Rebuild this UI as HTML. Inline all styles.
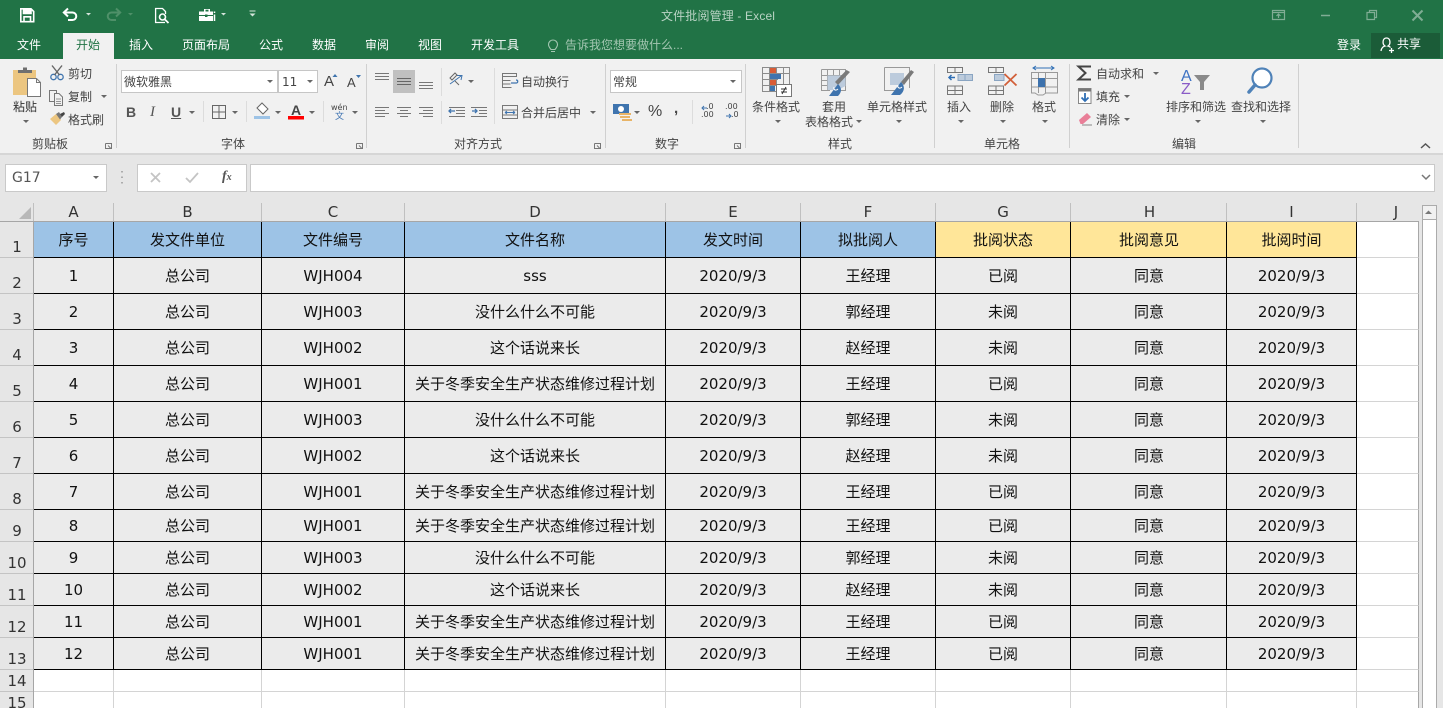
<!DOCTYPE html>
<html lang="zh-CN"><head><meta charset="utf-8"><title>文件批阅管理 - Excel</title>
<style>
html,body{margin:0;padding:0;width:1443px;height:708px;overflow:hidden;background:#e6e6e6}
body{position:relative;font-family:"Liberation Sans","Noto Sans CJK SC",sans-serif}
.b{position:absolute}
.t{position:absolute;white-space:nowrap;line-height:16px;font-size:12px;color:#444;margin-top:1px}
.g{color:#fff}
.a{position:absolute;width:0;height:0;border-top:3px solid #666;border-left:3px solid transparent;border-right:3px solid transparent}
.d{font-family:"DejaVu Sans","Noto Sans CJK SC",sans-serif}
table{position:absolute;left:34px;top:222px;border-collapse:separate;border-spacing:0;table-layout:fixed;width:1385px;font:15px/18px "DejaVu Sans","Noto Sans CJK SC",sans-serif;color:#111}
td{box-sizing:border-box;padding:0;text-align:center;vertical-align:middle;border-right:1px solid #000;border-bottom:1px solid #000;background:#ebebeb;white-space:nowrap;overflow:hidden}
td:nth-child(8){padding-left:1px}
td.h{background:#9dc3e6}td.y{background:#ffe699}
td.j{background:#fff;border-right:1px solid #a8a8a8;border-bottom:1px solid #d4d4d4}
td.e{background:#fff;border-right:1px solid #d4d4d4;border-bottom:1px solid #d4d4d4}
.c{position:absolute;top:204px;height:17px;line-height:17px;font:15px/17px "DejaVu Sans",sans-serif;color:#333;text-align:center}
.r{position:absolute;left:0;width:34px;text-align:center;font:15px/18px "DejaVu Sans",sans-serif;color:#333;margin-top:1px}
svg{position:absolute;left:0;top:0}
</style></head><body>
<div class="b" style="left:0;top:0;width:1443px;height:59px;background:#217346"></div>
<div class="b" style="left:63px;top:33px;width:51px;height:26px;background:#f1f1f1"></div>
<div class="b" style="left:1371px;top:33px;width:69px;height:25px;background:#1b5c38"></div>
<div class="b" style="left:0;top:59px;width:1443px;height:94px;background:#f1f1f1"></div>
<div class="b" style="left:0;top:153px;width:1443px;height:2px;background:#d6d6d6"></div>

<!-- boxes -->
<div class="b" style="left:121px;top:70px;width:155px;height:21px;background:#fff;border:1px solid #c6c6c6"></div>
<div class="b" style="left:278px;top:70px;width:38px;height:21px;background:#fff;border:1px solid #c6c6c6"></div>
<div class="b" style="left:610px;top:70px;width:130px;height:21px;background:#fff;border:1px solid #c6c6c6"></div>
<div class="b" style="left:393px;top:70px;width:22px;height:23px;background:#c0c0c0"></div>
<div class="b" style="left:5px;top:164px;width:100px;height:26px;background:#fff;border:1px solid #c9c9c9"></div>
<div class="b" style="left:137px;top:164px;width:108px;height:26px;background:#fff;border:1px solid #c9c9c9"></div>
<div class="b" style="left:250px;top:164px;width:1183px;height:26px;background:#fff;border:1px solid #c9c9c9"></div>

<!-- title / tabs -->
<span class="t" style="left:661px;top:7px;color:#b9d3c4;letter-spacing:.15px">文件批阅管理 - Excel</span>
<span class="t g" style="left:17px;top:36px">文件</span>
<span class="t" style="left:76px;top:36px;color:#217346">开始</span>
<span class="t g" style="left:129px;top:36px">插入</span>
<span class="t g" style="left:182px;top:36px">页面布局</span>
<span class="t g" style="left:259px;top:36px">公式</span>
<span class="t g" style="left:312px;top:36px">数据</span>
<span class="t g" style="left:365px;top:36px">审阅</span>
<span class="t g" style="left:418px;top:36px">视图</span>
<span class="t g" style="left:471px;top:36px">开发工具</span>
<span class="t" style="left:565px;top:36px;color:#a3c6b1">告诉我您想要做什么...</span>
<span class="t g" style="left:1337px;top:36px">登录</span>
<span class="t g" style="left:1397px;top:35px">共享</span>

<!-- clipboard -->
<span class="t" style="left:13px;top:98px;color:#333">粘贴</span><span class="a" style="left:23px;top:120px"></span>
<span class="t" style="left:68px;top:65px">剪切</span>
<span class="t" style="left:68px;top:88px">复制</span><span class="a" style="left:101px;top:95px"></span>
<span class="t" style="left:68px;top:111px">格式刷</span>
<span class="t" style="left:32px;top:135px">剪贴板</span>
<!-- font -->
<span class="t" style="left:124px;top:73px">微软雅黑</span><span class="a" style="left:267px;top:80px"></span>
<span class="t d" style="left:282px;top:73px">11</span><span class="a" style="left:307px;top:80px"></span>
<span class="t" style="left:324px;top:72px;font-size:15px;line-height:18px">A</span>
<span class="t" style="left:347px;top:74px;font-size:13px;line-height:16px">A</span>
<span class="t" style="left:126px;top:103px;font:bold 14px/16px 'Liberation Sans';color:#555">B</span>
<span class="t" style="left:150px;top:103px;font:italic 15px/16px 'Liberation Serif';color:#555">I</span>
<span class="t" style="left:171px;top:103px;font:bold 14px/16px 'Liberation Sans';text-decoration:underline;color:#555">U</span>
<span class="a" style="left:189px;top:111px"></span><span class="a" style="left:232px;top:111px"></span>
<span class="a" style="left:275px;top:111px"></span><span class="a" style="left:309px;top:111px"></span>
<span class="t" style="left:288px;top:102px;font-size:14px;font-weight:bold;line-height:14px;width:16px;text-align:center">A</span>
<span class="t d" style="left:331px;top:102px;font-size:8px;line-height:10px">wén</span>
<span class="t" style="left:335px;top:110px;font-size:9px;line-height:11px;color:#3a70b0">文</span>
<span class="a" style="left:352px;top:111px"></span>
<span class="t" style="left:221px;top:135px">字体</span>
<!-- alignment -->
<span class="a" style="left:468px;top:80px"></span>
<span class="t" style="left:521px;top:73px">自动换行</span>
<span class="t" style="left:521px;top:104px">合并后居中</span><span class="a" style="left:590px;top:111px"></span>
<span class="t" style="left:454px;top:135px">对齐方式</span>
<!-- number -->
<span class="t" style="left:613px;top:73px">常规</span><span class="a" style="left:730px;top:80px"></span>
<span class="a" style="left:634px;top:111px"></span>
<span class="t" style="left:648px;top:103px;font-size:16px">%</span>
<span class="t" style="left:674px;top:100px;font-size:15px;font-weight:bold">,</span>
<span class="t d" style="left:706px;top:101px;font-size:8px;line-height:10px">.0</span>
<span class="t d" style="left:701px;top:109px;font-size:8px;line-height:10px">.00</span>
<span class="t d" style="left:725px;top:101px;font-size:8px;line-height:10px">.00</span>
<span class="t d" style="left:731px;top:109px;font-size:8px;line-height:10px">.0</span>
<span class="t" style="left:655px;top:135px">数字</span>
<!-- styles -->
<span class="t" style="left:752px;top:98px">条件格式</span><span class="a" style="left:775px;top:120px"></span>
<span class="t" style="left:822px;top:98px">套用</span>
<span class="t" style="left:805px;top:113px">表格格式</span><span class="a" style="left:856px;top:120px"></span>
<span class="t" style="left:867px;top:98px">单元格样式</span><span class="a" style="left:896px;top:120px"></span>
<span class="t" style="left:828px;top:135px">样式</span>
<!-- cells -->
<span class="t" style="left:947px;top:98px">插入</span><span class="a" style="left:958px;top:120px"></span>
<span class="t" style="left:990px;top:98px">删除</span><span class="a" style="left:1000px;top:120px"></span>
<span class="t" style="left:1032px;top:98px">格式</span><span class="a" style="left:1042px;top:120px"></span>
<span class="t" style="left:984px;top:135px">单元格</span>
<!-- editing -->
<span class="t" style="left:1096px;top:65px">自动求和</span><span class="a" style="left:1153px;top:72px"></span>
<span class="t" style="left:1096px;top:88px">填充</span><span class="a" style="left:1124px;top:95px"></span>
<span class="t" style="left:1096px;top:111px">清除</span><span class="a" style="left:1124px;top:118px"></span>
<span class="t" style="left:1166px;top:98px">排序和筛选</span><span class="a" style="left:1195px;top:120px"></span>
<span class="t" style="left:1231px;top:98px">查找和选择</span><span class="a" style="left:1260px;top:120px"></span>
<span class="t" style="left:1172px;top:135px">编辑</span>

<!-- formula -->
<span class="t d" style="left:12px;top:168px;font-size:14px;line-height:18px;color:#555">G17</span><span class="a" style="left:93px;top:176px"></span>
<span class="t" style="left:222px;top:168px;font:italic bold 14px/16px 'Liberation Serif';color:#555">f<span style="font-size:10px">x</span></span>

<!-- sheet -->
<div class="b" style="left:0;top:221px;width:1419px;height:1px;background:#a6a6a6"></div>
<div class="b" style="left:33px;top:222px;width:1px;height:486px;background:#a6a6a6"></div>
<span class="c" style="left:34px;width:79px">A</span><span class="c" style="left:114px;width:147px">B</span><span class="c" style="left:262px;width:142px">C</span><span class="c" style="left:405px;width:260px">D</span><span class="c" style="left:666px;width:134px">E</span><span class="c" style="left:801px;width:134px">F</span><span class="c" style="left:936px;width:134px">G</span><span class="c" style="left:1072px;width:155px">H</span><span class="c" style="left:1227px;width:129px">I</span><span class="c" style="left:1357px;width:78px">J</span>
<span class="r" style="top:237px">1</span><span class="r" style="top:273px">2</span><span class="r" style="top:309px">3</span><span class="r" style="top:345px">4</span><span class="r" style="top:381px">5</span><span class="r" style="top:417px">6</span><span class="r" style="top:453px">7</span><span class="r" style="top:489px">8</span><span class="r" style="top:521px">9</span><span class="r" style="top:553px">10</span><span class="r" style="top:585px">11</span><span class="r" style="top:617px">12</span><span class="r" style="top:649px">13</span><span class="r" style="top:671px">14</span><span class="r" style="top:693px">15</span>

<table>
<colgroup><col style="width:80px"><col style="width:148px"><col style="width:143px"><col style="width:261px"><col style="width:135px"><col style="width:135px"><col style="width:135px"><col style="width:156px"><col style="width:130px"><col style="width:62px"></colgroup>
<tr style="height:36px"><td class="h">序号</td><td class="h">发文件单位</td><td class="h">文件编号</td><td class="h">文件名称</td><td class="h">发文时间</td><td class="h">拟批阅人</td><td class="y">批阅状态</td><td class="y">批阅意见</td><td class="y">批阅时间</td><td class="j"></td></tr>
<tr style="height:36px"><td>1</td><td>总公司</td><td>WJH004</td><td>sss</td><td>2020/9/3</td><td>王经理</td><td>已阅</td><td>同意</td><td>2020/9/3</td><td class="j"></td></tr>
<tr style="height:36px"><td>2</td><td>总公司</td><td>WJH003</td><td>没什么什么不可能</td><td>2020/9/3</td><td>郭经理</td><td>未阅</td><td>同意</td><td>2020/9/3</td><td class="j"></td></tr>
<tr style="height:36px"><td>3</td><td>总公司</td><td>WJH002</td><td>这个话说来长</td><td>2020/9/3</td><td>赵经理</td><td>未阅</td><td>同意</td><td>2020/9/3</td><td class="j"></td></tr>
<tr style="height:36px"><td>4</td><td>总公司</td><td>WJH001</td><td>关于冬季安全生产状态维修过程计划</td><td>2020/9/3</td><td>王经理</td><td>已阅</td><td>同意</td><td>2020/9/3</td><td class="j"></td></tr>
<tr style="height:36px"><td>5</td><td>总公司</td><td>WJH003</td><td>没什么什么不可能</td><td>2020/9/3</td><td>郭经理</td><td>未阅</td><td>同意</td><td>2020/9/3</td><td class="j"></td></tr>
<tr style="height:36px"><td>6</td><td>总公司</td><td>WJH002</td><td>这个话说来长</td><td>2020/9/3</td><td>赵经理</td><td>未阅</td><td>同意</td><td>2020/9/3</td><td class="j"></td></tr>
<tr style="height:36px"><td>7</td><td>总公司</td><td>WJH001</td><td>关于冬季安全生产状态维修过程计划</td><td>2020/9/3</td><td>王经理</td><td>已阅</td><td>同意</td><td>2020/9/3</td><td class="j"></td></tr>
<tr style="height:32px"><td>8</td><td>总公司</td><td>WJH001</td><td>关于冬季安全生产状态维修过程计划</td><td>2020/9/3</td><td>王经理</td><td>已阅</td><td>同意</td><td>2020/9/3</td><td class="j"></td></tr>
<tr style="height:32px"><td>9</td><td>总公司</td><td>WJH003</td><td>没什么什么不可能</td><td>2020/9/3</td><td>郭经理</td><td>未阅</td><td>同意</td><td>2020/9/3</td><td class="j"></td></tr>
<tr style="height:32px"><td>10</td><td>总公司</td><td>WJH002</td><td>这个话说来长</td><td>2020/9/3</td><td>赵经理</td><td>未阅</td><td>同意</td><td>2020/9/3</td><td class="j"></td></tr>
<tr style="height:32px"><td>11</td><td>总公司</td><td>WJH001</td><td>关于冬季安全生产状态维修过程计划</td><td>2020/9/3</td><td>王经理</td><td>已阅</td><td>同意</td><td>2020/9/3</td><td class="j"></td></tr>
<tr style="height:32px"><td>12</td><td>总公司</td><td>WJH001</td><td>关于冬季安全生产状态维修过程计划</td><td>2020/9/3</td><td>王经理</td><td>已阅</td><td>同意</td><td>2020/9/3</td><td class="j"></td></tr>
<tr style="height:22px"><td class="e"></td><td class="e"></td><td class="e"></td><td class="e"></td><td class="e"></td><td class="e"></td><td class="e"></td><td class="e"></td><td class="e"></td><td class="j"></td></tr>
<tr style="height:22px"><td class="e"></td><td class="e"></td><td class="e"></td><td class="e"></td><td class="e"></td><td class="e"></td><td class="e"></td><td class="e"></td><td class="e"></td><td class="j"></td></tr>
</table>

<div class="b" style="left:1422px;top:205px;width:13px;height:503px;background:#fff;border-left:1px solid #ababab;border-right:1px solid #ababab"></div>
<div class="b" style="left:1422px;top:205px;width:13px;height:13px;background:#f1f1f1;border:1px solid #ababab"></div>

<svg width="1443" height="708" viewBox="0 0 1443 708" fill="none">
<!-- QAT -->
<g stroke="#fff" stroke-width="1.6">
<path d="M20.8 8.8H31L33.7 11.5V21.7H20.8Z"/><path d="M23.5 9V13.5H31V9" fill="#fff"/><path d="M24 21.5V16.8H30.5V21.5"/>
<path d="M68 8.5L63.8 12.5L68 16.5M64 12.5H72.5A3.7 3.7 0 0 1 72.5 20H68" stroke-width="2"/>
<path d="M116 8.5L120.2 12.5L116 16.5M120 12.5H111.5A3.7 3.7 0 0 0 111.5 20H116" stroke="#4f9069" stroke-width="2"/>
<path d="M165 22.5H155.6V8.5H162.5L165.5 11.5V14" stroke-width="1.3"/><circle cx="162.5" cy="17" r="3"/><path d="M164.8 19.4L168.5 23" stroke-width="1.8"/>
</g>
<path d="M199 11.5H204V9H210V11.5H213V21H199Z" fill="#fff"/><path d="M205.500 9.700H208.500V11.500H205.500Z" fill="#217346"/><path d="M199 15.500H213" stroke="#217346"/><path d="M205 14.500H207.500V17H205Z" fill="#217346"/><path d="M214.500 11.500V13M214.500 14.500V21" stroke="#fff" stroke-width="1.500"/>
<g fill="#d5e4db"><path d="M86 13H91L88.500 15.500Z"/><path d="M221 13H226L223.500 15.500Z"/><path d="M249.500 13.500H255.500L252.500 16.500Z"/><path d="M249.500 10.500H255.500V11.500H249.500Z"/></g>
<path d="M128 13H133L130.500 15.500Z" fill="#4f9069"/>
<!-- window controls -->
<g stroke="#80ad94" stroke-width="1.200">
<path d="M1272.500 10.500H1284.500V19.500H1272.500Z"/><path d="M1272.500 12.500H1284.500"/><path d="M1278.500 18V14.500M1276.500 16L1278.500 14L1280.500 16"/>
<path d="M1321 15.500H1330" stroke-width="1.500"/>
<path d="M1367 12.500H1374.500V19.500H1367ZM1369.500 12.500V10.500H1376.500V17.500H1374.500"/>
<path d="M1412.500 10.500L1422.500 20.500M1422.500 10.500L1412.500 20.500" stroke-width="2"/>
</g>
<!-- bulb -->
<path d="M551 50.500C549.500 48.500 548.500 47.500 548.500 45.500A4.500 4.500 0 0 1 557.500 45.500C557.500 47.500 556.500 48.500 555 50.500ZM551 52.500H555" stroke="#a3c6b1" stroke-width="1.100" transform="translate(0 -1)"/>
<!-- person -->
<path d="M1381 51C1381.500 47.500 1383 46.500 1385 46C1382 44 1382.500 38 1386.500 38C1390.500 38 1391 44 1388 46C1389 46.300 1390 46.800 1390.500 47.500M1389 50.500H1394M1391.500 48V53" stroke="#fff" stroke-width="1.300"/>
<!-- ribbon separators -->
<path d="M116.500 64V148M366.500 64V148M605.500 64V148M745.500 64V148M934.500 64V148M1069.500 64V148M1298.500 64V148" stroke="#d0d0d0"/>
<path d="M203.500 101V122M246.500 101V122M323.500 101V122M441.500 68V96M441.500 101V124M494.500 68V124M692.500 100V124" stroke="#dcdcdc"/>
<!-- launchers -->
<g stroke="#777"><path d="M105.500 143.500V148.500H111.500V143.500H105.500M108 145.500L110.500 148"/><path d="M356.500 143.500V148.500H362.500V143.500H356.500M359 145.500L361.500 148"/><path d="M594.500 143.500V148.500H600.500V143.500H594.500M597 145.500L599.500 148"/><path d="M734.500 143.500V148.500H740.500V143.500H734.500M737 145.500L739.500 148"/></g>
<!-- collapse -->
<path d="M1421 148L1425.500 144L1430 148" stroke="#555" stroke-width="1.500"/>
<!-- paste -->
<path d="M13 70H36V95H13Z" fill="#ecc681"/>
<path d="M18 73V70H23V67.500H27V70H32V73Z" fill="#6f6f6f"/>
<path d="M27.500 78.500H36.500L40.500 82.500V96.500H27.500Z" fill="#fff" stroke="#777"/>
<path d="M36.500 78.500V82.500H40.500" stroke="#777"/>
<!-- cut -->
<g stroke="#3f74ae" stroke-width="1.300"><circle cx="53.500" cy="77" r="2.700"/><circle cx="60.500" cy="77" r="2.700"/></g>
<path d="M52 65.500L59.500 75M62 65.500L54.500 75" stroke="#666" stroke-width="1.400"/>
<!-- copy -->
<g stroke="#777"><path d="M49.500 90.500H56.500V101.500H49.500Z"/><path d="M54.500 93.500H59L62.500 97V105.500H54.500Z" fill="#f1f1f1"/><path d="M56 99H61M56 101.500H61M56 103.500H61" stroke-width=".8"/></g>
<!-- brush -->
<path d="M50 119L56 114L61 120L56 125C54 123 52 121 50 119Z" fill="#ecc681"/>
<path d="M56 114L59 112L62 117L60 119.500Z" fill="#777"/><path d="M60 114L64 112L65 114L62 117Z" fill="#444"/>
<!-- grow shrink -->
<path d="M335 77L337.500 74H332.500Z" fill="#3f74ae" transform="rotate(180 335 75.500)"/><path d="M356 75H361L358.500 78Z" fill="#3f74ae"/>
<!-- border -->
<path d="M212.500 105.500H225.500V118.500H212.500ZM219 105.500V118.500M212.500 112H225.500" stroke="#666"/>
<!-- fill -->
<path d="M257 108L262 103L268 109L263 114Z" fill="#fff" stroke="#666"/><path d="M254 116H270V119H254Z" fill="#9dc3e6"/>
<path d="M288 116H304V119.500H288Z" fill="#f00"/>
<!-- align lines -->
<g stroke="#777"><path d="M375 73.500H389M375 76.500H389M375 79.500H389"/><path d="M397 78.500H411M397 81.500H411M397 84.500H411" stroke="#666"/><path d="M419 82.500H433M419 85.500H433M419 88.500H433"/>
<path d="M375 107.500H389M375 110.500H385M375 113.500H389M375 116.500H385"/><path d="M397 107.500H411M400 110.500H408M397 113.500H411M400 116.500H408"/><path d="M419 107.500H433M423 110.500H433M419 113.500H433M423 116.500H433"/>
<path d="M456 107.500H465M456 110.500H465M456 113.500H465M449 116.500H465M449 107.500H465" />
<path d="M479 107.500H487M479 110.500H487M479 113.500H487M471 116.500H487M471 107.500H487"/></g>
<path d="M455 111H449M451 109L449 111L451 113" stroke="#3f74ae" stroke-width="1.300"/>
<path d="M472 111H477M475 109L477 111L475 113" stroke="#3f74ae" stroke-width="1.300"/>
<!-- orientation -->
<path d="M450 84L461 76M457 75.500L462 75.500L461 80" stroke="#3f74ae"/><path d="M450 78L455 73L457 75L452 80ZM455 81L459 85" stroke="#666"/>
<!-- wrap -->
<path d="M502.500 73.500H516.500V76.500H502.500ZM502.500 76.500V87.500H511.500M502.500 80.500H510.500M502.500 84H510.500" stroke="#777"/>
<path d="M511 83H516.500C518 83 518.500 80 516 80" stroke="#3f74ae" stroke-width="1.200"/>
<!-- merge -->
<path d="M502.500 105.500H517.500V118.500H502.500ZM502.500 110H517.500M502.500 115H517.500" stroke="#777"/><path d="M505 112.500H515M505 112.500L507 111M505 112.500L507 114M515 112.500L513 111M515 112.500L513 114" stroke="#3f74ae"/>
<!-- currency -->
<path d="M613 104H629V114H613Z" fill="#3f74ae"/><circle cx="621" cy="109" r="3" fill="#fff"/><path d="M619 113H631V115H619ZM620 116H630V118H620ZM622 119H632V121H622Z" fill="#e8b467"/>
<!-- decimal arrows -->
<path d="M707 108H702M704 106L702 108L704 110" stroke="#3f74ae"/><path d="M726 116H731M729 114L731 116L729 118" stroke="#3f74ae"/>
<!-- cond format -->
<path d="M762.500 67.500H789.500V91.500H762.500ZM769.500 67.500V91.500M776.500 67.500V85M783.500 67.500V84M762.500 73.500H789.500M762.500 79.500H778M762.500 85.500H776" stroke="#8c8c8c"/>
<path d="M770 68H776V73H770Z" fill="#d85c36"/><path d="M770 74H781V79H770Z" fill="#3f74ae"/><path d="M770 80H776V85H770Z" fill="#d85c36"/><path d="M770 86H775V91H770Z" fill="#3f74ae"/>
<path d="M776.500 84.500H791.500V96.500H776.500Z" fill="#fff" stroke="#777"/><path d="M781 89H787M781 92H787M782 94L786 87" stroke="#333"/>
<!-- table format -->
<path d="M821.500 69.500H845.500V90.500H834M821.500 69.500V90.500H830M827.500 69.500V90M833.500 69.500V90M839.500 69.500V88M821.500 75.500H845.500M821.500 80.500H845.500M821.500 85.500H845.500" stroke="#999"/>
<path d="M827.500 75.500H845.500V86L838 90H827.500Z" fill="#bccbdc"/>
<path d="M849.500 73L853 75L841 88L838 85Z" transform="translate(-3 -3)" fill="#7a7a7a"/>
<path d="M838 84L829 96H838C842 92 842 88 838 84Z" fill="#3f74ae"/><path d="M834 87C833 90 836 91 838 89" stroke="#fff"/>
<!-- cell style -->
<path d="M884.500 67.500H909.500V88M884.500 67.500V90.500H896" stroke="#999"/>
<path d="M890 73H904V85H890Z" fill="#bccbdc"/>
<path d="M911 70L914 72L904 85L901 82Z" fill="#7a7a7a"/>
<path d="M901 82L891 95H900C905 91 905 86 901 82Z" fill="#3f74ae"/><path d="M898 85C897 88 900 89 902 87" stroke="#fff"/>
<!-- insert -->
<path d="M947.500 67.500H962.500V72.500H947.500ZM955 67.500V72.500M947.500 86H962.500V94.500H947.500ZM955 86V94.500M947.500 90.500H962.500" stroke="#777"/>
<path d="M958 74.500H972.500V80.500H958ZM965 74.500V80.500" fill="#bccbdc" stroke="#8aa5c2"/>
<path d="M955 77.500H949M951.500 75L949 77.500L951.500 80" stroke="#2f6fb5" stroke-width="1.500"/>
<!-- delete -->
<path d="M988.500 67.500H1003.500V72.500H988.500ZM996 67.500V72.500M988.500 86H1003.500V94.500H988.500ZM996 86V94.500M988.500 90.500H1003.500" stroke="#777"/>
<path d="M994.500 74.500H1004V80.500H994.500Z" fill="#bccbdc" stroke="#8aa5c2"/>
<path d="M1004.500 74L1016.500 85.500M1016.500 74L1004.500 85.500" stroke="#d2603a" stroke-width="1.800"/>
<!-- format -->
<path d="M1033 68H1054M1036 66L1033 68L1036 70M1051 66L1054 68L1051 70" stroke="#2f6fb5"/>
<path d="M1031.500 72.500H1057.500V93H1046L1043 95H1038L1035 93H1031.500ZM1031.500 78.500H1057.500M1031.500 87H1057.500M1038.500 72.500V93M1045.500 72.500V93" stroke="#999"/>
<path d="M1038 78H1045V87H1038Z" fill="#3d72ad"/>
<!-- sigma -->
<path d="M1091 66.500H1078.500L1085.500 73L1078.500 79.500H1091" stroke="#444" stroke-width="2"/>
<!-- fill down -->
<path d="M1078.500 88.500H1091V103.500H1078.500Z" fill="#fff" stroke="#888"/><path d="M1078.500 88.500H1091V91.500H1078.500Z" fill="#777"/>
<path d="M1085 93V101M1081.500 97.500L1085 101L1088.500 97.500" stroke="#2f6fb5" stroke-width="1.800"/>
<!-- eraser -->
<path d="M1079 120L1087 113L1091 117L1083 124H1080.500Z" fill="#e97f98"/><path d="M1082 125H1092" stroke="#888"/>
<!-- sort -->
<text x="1181" y="81" font-family="Liberation Sans" font-size="16" fill="#3d72c4">A</text>
<text x="1181" y="94" font-family="Liberation Sans" font-size="16" fill="#8a5cc7">Z</text>
<path d="M1194 75H1210L1204 82V90H1200V82Z" fill="#8a8a8a"/>
<!-- find -->
<circle cx="1262" cy="78" r="9.500" fill="#fff" stroke="#4f82b8" stroke-width="2.200"/>
<path d="M1255 85L1249 92" stroke="#4f82b8" stroke-width="3.500" stroke-linecap="round"/>
<!-- formula bar -->
<path d="M122 171V172.500M122 176.500V178M122 182V183.500" stroke="#999" stroke-width="1.500"/>
<path d="M151 173L160 182M160 173L151 182" stroke="#c4c4c4" stroke-width="1.800"/>
<path d="M186 178L190 182L198 173" stroke="#c4c4c4" stroke-width="1.800"/>
<path d="M1422 175L1426 179L1430 175" stroke="#777" stroke-width="1.500"/>
<!-- sheet header -->
<path d="M19 219L31 207V219Z" fill="#b8b8b8"/>
<path d="M33.500 203V221M113.500 203V221M261.500 203V221M404.500 203V221M665.500 203V221M800.500 203V221M935.500 203V221M1070.500 203V221M1226.500 203V221M1356.500 203V221" stroke="#c0c0c0"/>
<path d="M0 257.500H33M0 293.500H33M0 329.500H33M0 365.500H33M0 401.500H33M0 437.500H33M0 473.500H33M0 509.500H33M0 541.500H33M0 573.500H33M0 605.500H33M0 637.500H33M0 669.500H33M0 691.500H33" stroke="#c4c4c4"/>
<path d="M1425 214L1428.500 210.500L1432 214Z" fill="#777"/>
</svg>
</body></html>
